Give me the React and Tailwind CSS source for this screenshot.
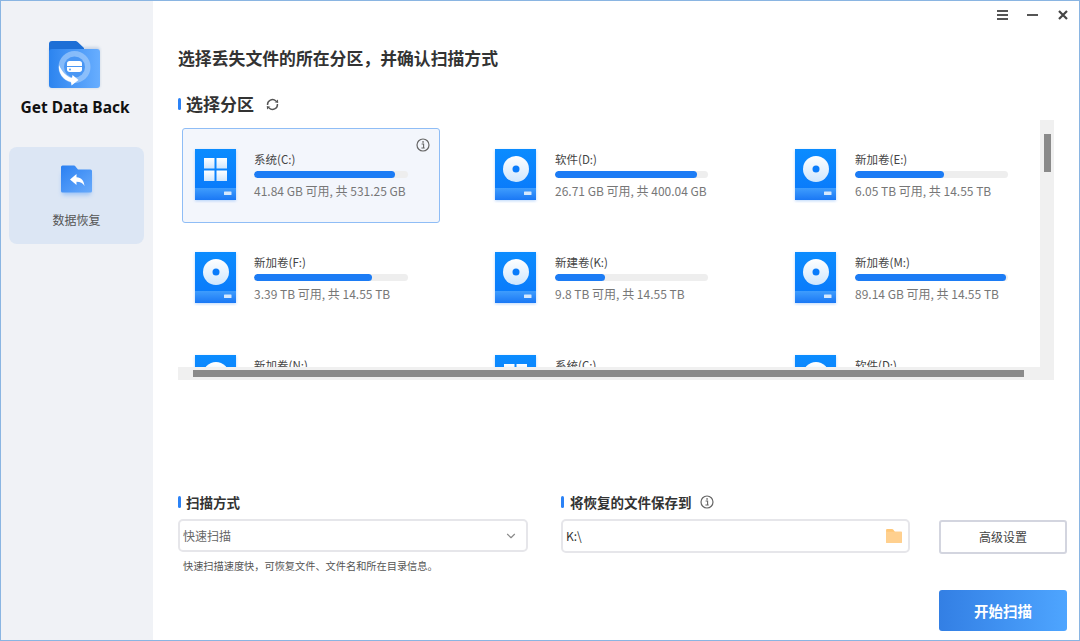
import React from "react";
import { ChevronDown } from "lucide-react";

const drives = [
  { name: "系统(C:)", info: "41.84 GB 可用, 共 531.25 GB", pct: 91.5, win: true, sel: true },
  { name: "软件(D:)", info: "26.71 GB 可用, 共 400.04 GB", pct: 93 },
  { name: "新加卷(E:)", info: "6.05 TB 可用, 共 14.55 TB", pct: 58 },
  { name: "新加卷(F:)", info: "3.39 TB 可用, 共 14.55 TB", pct: 76.5 },
  { name: "新建卷(K:)", info: "9.8 TB 可用, 共 14.55 TB", pct: 32.5 },
  { name: "新加卷(M:)", info: "89.14 GB 可用, 共 14.55 TB", pct: 99 },
  { name: "新加卷(N:)", info: "6.05 TB 可用, 共 14.55 TB", pct: 58 },
  { name: "系统(C:)", info: "41.84 GB 可用, 共 531.25 GB", pct: 91.5, win: true },
  { name: "软件(D:)", info: "26.71 GB 可用, 共 400.04 GB", pct: 93 },
];

function DriveIcon({ win, id }) {
  return (
    <svg width="47" height="57" viewBox="-3 -3 47 57" className="shrink-0 ml-[-3px] mt-[-3px]">
      <defs>
        <linearGradient id={`d${id}`} x1="0" y1="0" x2="0" y2="1">
          <stop offset="0" stopColor="#0b8cff" />
          <stop offset="1" stopColor="#0a7cfb" />
        </linearGradient>
        <linearGradient id={`e${id}`} x1="0" y1="0" x2="0" y2="1">
          <stop offset="0" stopColor="#3f9dfd" />
          <stop offset="1" stopColor="#1a78f5" />
        </linearGradient>
        <linearGradient id={`c${id}`} x1="0" y1="0" x2="0" y2="1">
          <stop offset="0" stopColor="#ffffff" />
          <stop offset="1" stopColor="#cfe6fd" />
        </linearGradient>
        <filter id={`f${id}`} x="-20%" y="-20%" width="140%" height="140%">
          <feGaussianBlur stdDeviation="1.5" />
        </filter>
      </defs>
      <rect x="0" y="1" width="41" height="51" fill="#3b8df5" opacity="0.35" filter={`url(#f${id})`} />
      <rect x="0" y="0" width="41" height="39" fill={`url(#d${id})`} />
      <rect x="0" y="39" width="41" height="12" fill={`url(#e${id})`} />
      <rect x="29" y="42.5" width="7.5" height="3.5" rx="0.5" fill="#d5e8fd" />
      {win ? (
        <g fill={`url(#c${id})`}>
          <rect x="9" y="9" width="10.5" height="10.5" />
          <rect x="21.5" y="9" width="10.5" height="10.5" />
          <rect x="9" y="21.5" width="10.5" height="10.5" />
          <rect x="21.5" y="21.5" width="10.5" height="10.5" />
        </g>
      ) : (
        <g>
          <circle cx="21" cy="20" r="13" fill={`url(#c${id})`} />
          <circle cx="21" cy="20" r="3.5" fill="#0a7cfb" />
        </g>
      )}
    </svg>
  );
}

function InfoIcon({ size = 14, color = "#666" }) {
  return (
    <svg width={size} height={size} viewBox="0 0 14 14" fill="none">
      <circle cx="7" cy="7" r="6" stroke={color} strokeWidth="1.2" />
      <rect x="6.3" y="3.2" width="1.5" height="1.5" fill={color} />
      <path d="M5.6 6h2v3.8M5.4 10h3.3" stroke={color} strokeWidth="1.1" />
    </svg>
  );
}

function RefreshIcon() {
  return (
    <svg width="13" height="13" viewBox="0 0 13 13" fill="none" className="ml-[12px]">
      <path d="M1.600 7A4.900 4.900 0 0 1 9.900 3" stroke="#555" strokeWidth="1.500" />
      <path d="M11.400 6A4.900 4.900 0 0 1 3.100 10" stroke="#555" strokeWidth="1.500" />
      <path d="M8.600 4.200L12.200 5L12 1.400z" fill="#555" />
      <path d="M4.400 8.800L0.800 8L1 11.600z" fill="#555" />
    </svg>
  );
}

function DriveCard({ d, id }) {
  const shifted = id % 3 > 0;
  return (
    <div
      className={`relative rounded-[3px] border pl-[12px] pt-[20px] flex ${
        d.sel ? "h-[95px] mb-[-1px] border-[#8fbdf6] bg-[#f3f6fc]" : "h-[94px] border-transparent"
      }`}
    >
      <DriveIcon win={d.win} id={id} />
      <div className={shifted ? "ml-[16px] w-[153px]" : "ml-[15px] w-[154px]"}>
        <div className="text-[11.5px] leading-[16px] text-[#444] mt-[2px]">{d.name}</div>
        <div className="h-[7px] mt-[4px] rounded-full bg-[#eeeeee] overflow-hidden">
          <div className="h-full rounded-full bg-[#1c7cf5]" style={{ width: `${d.pct}%` }} />
        </div>
        <div className="text-[12px] leading-[16px] mt-[5px] text-[#777] whitespace-nowrap">{d.info}</div>
      </div>
      {d.sel && (
        <div className="absolute right-[9px] top-[9px]">
          <InfoIcon />
        </div>
      )}
    </div>
  );
}

function SectionTitle({ children, className = "", gap = "mr-[5px]" }) {
  return (
    <div className={`flex items-center ${className}`}>
      <div className={`w-[3px] h-[12px] rounded-full bg-[#2b82f6] ${gap}`} />
      <div className="font-bold text-[#333]">{children}</div>
    </div>
  );
}

function Logo() {
  return (
    <svg width="55" height="51" viewBox="0 0 55 51">
      <defs>
        <linearGradient id="lg1" x1="0" y1="0" x2="1" y2="0">
          <stop offset="0" stopColor="#2c84ef" />
          <stop offset="1" stopColor="#68aeff" />
        </linearGradient>
        <filter id="lgb" x="-20%" y="-20%" width="140%" height="140%">
          <feGaussianBlur stdDeviation="1.5" />
        </filter>
      </defs>
      <rect x="2" y="8" width="51" height="41" rx="3" fill="#7d9cc5" opacity="0.35" filter="url(#lgb)" />
      <path d="M2 15V5a3 3 0 0 1 3-3h23c1.5 0 2.5.6 3.5 1.8L37 9v8H2z" fill="#1d6fd6" />
      <path d="M2 13a3 3 0 0 1 3-3h45a3 3 0 0 1 3 3v33a3 3 0 0 1-3 3H5a3 3 0 0 1-3-3z" fill="url(#lg1)" />
      <circle cx="27.5" cy="28" r="16" fill="#9cc8fb" opacity="0.75" />
      <circle cx="27.5" cy="28" r="10.5" fill="#4a97f4" />
      <path d="M20 24.5c0-1.600 1-2.500 2.500-2.500h10c1.500 0 2.500.9 2.500 2.500V27H20z" fill="#fff" />
      <path d="M20 28h15v2.500c0 1.600-1 2.500-2.500 2.500h-10c-1.500 0-2.500-.9-2.500-2.500z" fill="#fff" />
      <circle cx="23" cy="30.500" r="0.900" fill="#4a97f4" />
      <path d="M12 26c-1 8 4 15 12 17l.5 3.500 7-5.500-6-5-.5 3c-5-1-10-6-13-13z" fill="#fff" />
    </svg>
  );
}

function NavIcon() {
  return (
    <svg width="39" height="35" viewBox="0 0 39 35">
      <defs>
        <linearGradient id="ng" x1="0" y1="0" x2="1" y2="1">
          <stop offset="0" stopColor="#2a80f2" />
          <stop offset="1" stopColor="#68aafb" />
        </linearGradient>
        <filter id="nb" x="-30%" y="-30%" width="160%" height="160%">
          <feGaussianBlur stdDeviation="2" />
        </filter>
      </defs>
      <rect x="5" y="9" width="29" height="22" rx="2" fill="#5ea2f8" opacity="0.5" filter="url(#nb)" />
      <path d="M4 3a1.500 1.500 0 0 1 1.500-1.500h11c1 0 1.500.4 2 1L21 5.500h12.500A1.500 1.500 0 0 1 35 7v20a1.500 1.500 0 0 1-1.500 1.500h-28A1.500 1.500 0 0 1 4 27z" fill="url(#ng)" />
      <path d="M13 15.500l6.500-5.500v3.200c5 .3 7.500 3.500 8 8.800-1.800-3-4-4.300-8-4.300v3.300z" fill="#fff" />
    </svg>
  );
}

export default function App() {
  return (
    <div
      className="w-[1080px] h-[641px] flex overflow-hidden bg-white border border-[#8ab5e2]"
      style={{ fontFamily: '"Noto Sans CJK SC", "Noto Sans", sans-serif' }}
    >
      <aside className="w-[152px] shrink-0 bg-[#f0f2f6] flex flex-col items-center">
        <div className="mt-[38px] mr-[5px] flex">
          <Logo />
        </div>
        <div
          className="mt-[7px] mr-[4px] text-[15.500px] leading-[20px] font-bold text-[#111] whitespace-nowrap"
          style={{ fontFamily: '"Noto Sans", sans-serif' }}
        >
          Get Data Back
        </div>
        <div className="mt-[30px] mr-[1px] w-[135px] h-[97px] rounded-[8px] bg-[#dce6f4] flex flex-col items-center pt-[17px]">
          <NavIcon />
          <div className="mt-[13px] text-[12px] leading-[16px] text-[#555]">数据恢复</div>
        </div>
      </aside>

      <main className="flex-1 min-w-0 flex flex-col pl-[25px]">
        <div className="h-[27px] flex items-center justify-end pr-[11px] text-[#444] mb-[18px]">
          <div className="w-[11px] flex flex-col gap-[2px]">
            <div className="h-[2px] bg-[#555]" />
            <div className="h-[2px] bg-[#555]" />
            <div className="h-[2px] bg-[#555]" />
          </div>
          <div className="w-[11px] h-[2px] bg-[#555] ml-[19px]" />
          <svg width="10" height="10" viewBox="0 0 10 10" className="ml-[20px]">
            <path d="M1 1l8 8M9 1l-8 8" stroke="#444" strokeWidth="2.200" />
          </svg>
        </div>

        <div className="text-[16.850px] leading-[24px] font-bold text-[#333]">选择丢失文件的所在分区，并确认扫描方式</div>

        <div className="flex items-center mt-[22px] h-[24px]">
          <SectionTitle className="text-[17px]">选择分区</SectionTitle>
          <RefreshIcon />
        </div>

        <div className="mt-[4px] w-[876px] h-[260px] flex flex-col">
          <div className="flex flex-1 min-h-0">
            <div className="flex-1 overflow-hidden pl-[4px] pt-[8px]">
              <div className="grid grid-cols-[258px_258px_258px] gap-x-[42px] gap-y-[9px]">
                {drives.map((d, i) => (
                  <DriveCard key={i} d={d} id={i} />
                ))}
              </div>
            </div>
            <div className="w-[14px] bg-[#f0f0f0] pt-[14px] pl-[4px]">
              <div className="w-[7px] h-[38px] bg-[#8a8a8a]" />
            </div>
          </div>
          <div className="h-[13px] bg-[#f0f0f0] pt-[3px] pl-[15px]">
            <div className="w-[831px] h-[7px] bg-[#8a8a8a]" />
          </div>
        </div>

        <div className="mt-[112px] flex">
          <div className="w-[350px]">
            <SectionTitle className="text-[13.500px] leading-[20px]">扫描方式</SectionTitle>
            <div className="mt-[7px] h-[33px] rounded-[5px] border-2 border-[#e6e6ea] flex items-center justify-between pl-[3px] pr-[8px]">
              <span className="text-[12px] text-[#666]">快速扫描</span>
              <ChevronDown size={14} color="#8a8a8a" />
            </div>
            <div className="mt-[7px] ml-[5px] text-[10.200px] leading-[14px] text-[#555]">快速扫描速度快，可恢复文件、文件名和所在目录信息。</div>
          </div>

          <div className="w-[349px] ml-[33px]">
            <div className="flex items-center">
              <SectionTitle className="text-[13.500px] leading-[20px]" gap="mr-[6px]">将恢复的文件保存到</SectionTitle>
              <div className="ml-[8px] flex">
                <InfoIcon size={14} color="#666" />
              </div>
            </div>
            <div className="mt-[7px] h-[34px] rounded-[5px] border-2 border-[#e6e6ea] flex items-center justify-between pl-[3px] pr-[6px]">
              <span className="text-[12px] text-[#333]">K:\</span>
              <svg width="16" height="14" viewBox="0 0 17 15">
                <path d="M0 1a1 1 0 0 1 1-1h5.500c.5 0 .8.2 1.100.6L9.500 3H16a1 1 0 0 1 1 1v10a1 1 0 0 1-1 1H1a1 1 0 0 1-1-1z" fill="#ffc777" />
                <path d="M0 3h17v11a1 1 0 0 1-1 1H1a1 1 0 0 1-1-1z" fill="#ffd08f" />
              </svg>
            </div>
          </div>

          <div className="w-[128px] ml-[29px] pt-[28px]">
            <button className="w-full h-[34px] rounded-[3px] border-2 border-[#d3d5df] text-[12px] text-[#444] bg-white">高级设置</button>
            <button className="w-full h-[41px] mt-[36px] rounded-[3px] bg-gradient-to-r from-[#337fe4] to-[#4ea5ff] text-[14.500px] font-bold text-white">开始扫描</button>
          </div>
        </div>
      </main>
    </div>
  );
}
